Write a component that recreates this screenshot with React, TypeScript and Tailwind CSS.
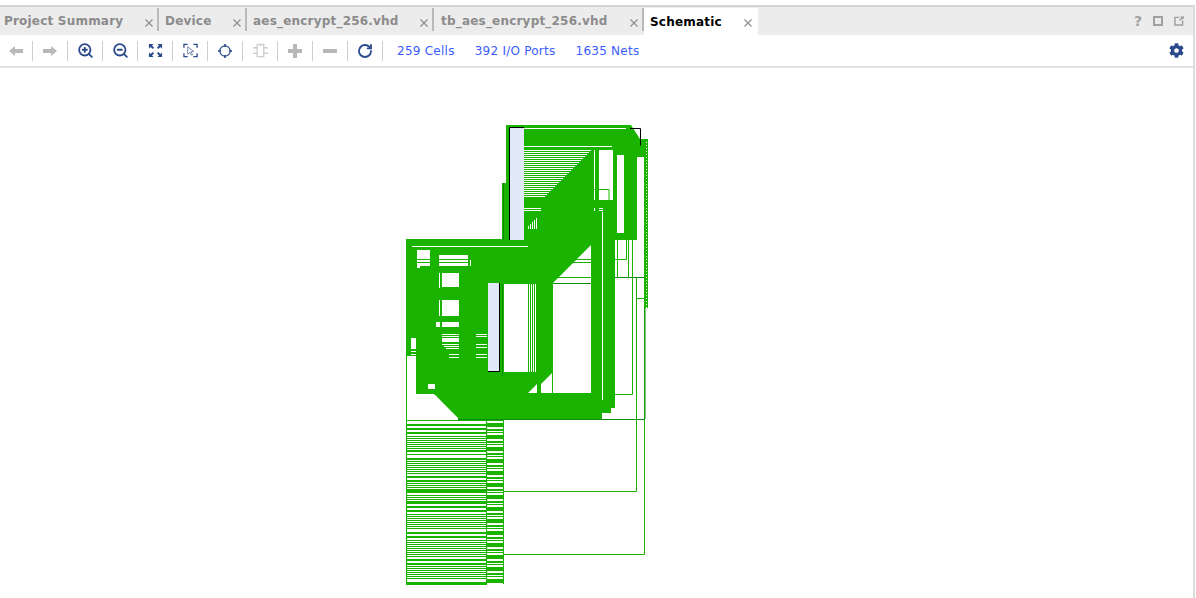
import { RotateCw, ZoomIn, ZoomOut } from 'lucide-react';
import { FaCog } from 'react-icons/fa';

const GREEN = '#1ab400';
const DARK = '#0b8a0b';
const CELL = '#dfe9f8';

const tabs = [
  { label: 'Project Summary', width: 'w-[159px]', pad: 'pl-1' },
  { label: 'Device', width: 'w-[88px]', pad: 'pl-[6px]' },
  { label: 'aes_encrypt_256.vhd', width: 'w-[187px]', pad: 'pl-[6px]' },
  { label: 'tb_aes_encrypt_256.vhd', width: 'w-[210px]', pad: 'pl-[7px]' },
];

const CloseIcon = () => (
  <svg width="8" height="8" viewBox="0 0 8 8" stroke="#8f8f8f" strokeWidth="1.200" className="mt-[3px]">
    <path d="M0.500 0.500l7 7M7.500 0.500l-7 7" />
  </svg>
);

const BackIcon = () => (
  <svg width="14" height="10" viewBox="0 0 14 10" fill="#b8b8b8">
    <path d="M0 5l6-5v3h8v4H6v3z" />
  </svg>
);

const ForwardIcon = () => (
  <svg width="14" height="10" viewBox="0 0 14 10" fill="#b8b8b8">
    <path d="M14 5L8 0v3H0v4h8v3z" />
  </svg>
);

const FitIcon = () => (
  <svg width="15" height="15" viewBox="0 0 16 16" fill="#2b4a8b">
    <path d="M1 1h5L4.300 2.700 6.500 5 5 6.500 2.700 4.300 1 6zM15 1v5l-1.700-1.700L11 6.500 9.500 5l2.200-2.300L10 1zM1 15v-5l1.700 1.700L5 9.500 6.500 11l-2.200 2.300L6 15zM15 15h-5l1.700-1.700L9.500 11 11 9.500l2.300 2.200L15 10z" />
  </svg>
);

const SelectIcon = () => (
  <svg width="15" height="15" viewBox="0 0 16 16" fill="none" stroke="#2b4a8b" strokeWidth="1.400">
    <path d="M1 5V1.500h4M11 1.500h4V5M1 11v3.500h4M11 14.500h4V11" />
    <path d="M5 4l6.500 5-3 .3 1.700 3.200-1.200.6-1.700-3.200L5 12z" strokeWidth="1" stroke="#7386ad" fill="#fff" />
  </svg>
);

const TargetIcon = () => (
  <svg width="14" height="14" viewBox="0 0 14 14" fill="none" stroke="#2b4a8b">
    <circle cx="7" cy="7" r="5.200" strokeWidth="1.200" />
    <path d="M7 0v3M7 11v3M0 7h3M11 7h3" strokeWidth="1.600" />
  </svg>
);

const ChipIcon = () => (
  <svg width="15" height="15" viewBox="0 0 16 16" fill="none" stroke="#cfcfcf" strokeWidth="1.500">
    <path d="M4.500 1.500h2.500a1 1 0 0 0 2 0h2.500v13h-7z" />
    <path d="M0 5h4.500M0 11h4.500M11.500 5H16M11.500 11H16" />
  </svg>
);

const PlusIcon = () => (
  <svg width="14" height="14" viewBox="0 0 14 14" fill="#b8b8b8">
    <path d="M5 0h4v5h5v4H9v5H5V9H0V5h5z" />
  </svg>
);

const MinusIcon = () => (
  <svg width="14" height="4" viewBox="0 0 14 4" fill="#b8b8b8">
    <rect width="14" height="4" />
  </svg>
);

const buttons = [
  <BackIcon key="back" />,
  <ForwardIcon key="forward" />,
  <ZoomIn key="in" size={17} strokeWidth={2.600} color="#2b4a8b" />,
  <ZoomOut key="out" size={17} strokeWidth={2.600} color="#2b4a8b" />,
  <FitIcon key="fit" />,
  <SelectIcon key="select" />,
  <TargetIcon key="target" />,
  <ChipIcon key="chip" />,
  <PlusIcon key="plus" />,
  <MinusIcon key="minus" />,
  <RotateCw key="refresh" size={16} strokeWidth={2.700} color="#2b4a8b" />,
];

// [x, y, w, h] of the white holes in the green mass
const holes = [
  [524, 128, 102, 1], [524, 146, 88, 1], [594, 150, 1, 50], [599, 150, 14, 50], [617, 155, 7, 78], [637, 157, 7, 83],
  [524, 208, 17, 1], [524, 210, 17, 1], [594, 208, 1, 3], [599, 208, 4, 1], [599, 210, 4, 1],
  [412, 246, 116, 1], [417, 250, 13, 9], [417, 260, 13, 2],
  [417, 263, 13, 3], [417, 266, 3, 2], [439, 255, 29, 4], [439, 260, 29, 2], [439, 263, 29, 3],
  [470, 260, 1, 6], [442, 273, 17, 1], [442, 274, 17, 13], [439, 273, 1, 15], [442, 300, 17, 16],
  [439, 300, 1, 16], [436, 322, 4, 5], [442, 322, 17, 5], [442, 334, 17, 1], [442, 336, 17, 1],
  [442, 338, 17, 4], [442, 344, 17, 1], [444, 346, 15, 1], [446, 348, 13, 1], [476, 334, 11, 1],
  [476, 336, 11, 1], [449, 354, 10, 1], [449, 357, 10, 1], [476, 344, 11, 1], [476, 347, 11, 1],
  [476, 354, 11, 1], [476, 357, 11, 1], [411, 338, 5, 11], [411, 351, 5, 1], [411, 354, 5, 1],
  [407, 356, 9, 38], [428, 384, 7, 5], [504, 284, 23, 88], [602, 212, 1, 188], [611, 408, 4, 5],
];

const stairLines = Array.from({ length: 24 }, (_, i) => ({ y: 150 + i * 2, end: 591 - i * 2 }));
const verticalStripes = [527, 529, 531, 533, 535];

// net list rows read off the picture, [y, height]
const listRows = [
  [420, 1], [424, 2], [428, 2], [432, 2], [436, 1], [438, 1], [440, 1], [442, 1], [444, 1], [446, 1], [448, 1],
  [450, 2], [454, 1], [458, 2], [461, 1], [463, 1], [465, 1], [467, 1], [469, 1], [471, 1], [473, 1], [476, 2],
  [480, 2], [483, 1], [485, 1], [487, 1], [489, 4], [495, 1], [497, 1], [499, 1], [501, 1], [502, 2], [506, 2],
  [510, 2], [514, 1], [516, 1], [518, 1], [520, 1], [522, 1], [524, 1], [526, 1], [528, 1], [532, 2], [536, 2],
  [540, 1], [542, 1], [544, 1], [546, 1], [548, 1], [550, 1], [552, 1], [554, 1], [556, 1], [559, 2], [563, 2],
  [566, 1], [568, 1], [570, 1], [572, 1], [574, 1], [576, 1], [578, 1], [582, 3],
];
const sideRows = Array.from({ length: 55 }, (_, i) => ({ y: 420 + i * 3, h: i % 4 === 1 ? 3 : i % 4 === 3 ? 2 : 1 }));

const Schematic = () => (
  <svg className="block" width="1193" height="530" viewBox="0 68 1193 530">
    {/* outer wires */}
    <g fill="none" stroke={GREEN} strokeWidth="1">
      <path d="M636.500 277v214.500H503M644.500 277v277.500H503M503.500 419v165M406.500 394v191M486.500 420v165" />
      <path d="M615 394.500h17.500V240M617.500 240v37M615 259.500h11.500V240M628.500 240v37M636 298.500h8.500" />
    </g>
    {/* main mass */}
    <path
      fill={GREEN}
      d="M506 125h125l9 14h8v101h-33v168l-4 5h-9v6H458l-24-25H406V239h96V183h4z"
    />
    <path d="M615 277.500h30M644.500 240v38" stroke={DARK} fill="none" />
    {/* the holes */}
    <g fill="#fff">
      {holes.map(([x, y, w, h]) => (
        <rect key={`${x}-${y}-${w}`} x={x} y={y} width={w} height={h} />
      ))}
      {stairLines.map((line) => (
        <rect key={line.y} x={524} y={line.y} width={line.end - 524} height={1} />
      ))}
      <path d="M591 245v148h-38V283zM552 373v20h-11v-9zM537 384v9h-9zM407 395h28l23 23v1h-51z" />
      {verticalStripes.map((x) => (
        <rect key={x} x={x} y={284} width={1} height={88} />
      ))}
      <path d="M528 226h1v3h-1zM530 224h1v5h-1zM532 222h1v7h-1zM534 220h1v9h-1zM536 218h1v11h-1z" />
    </g>
    {/* wires crossing the white parts */}
    <path d="M566 259.500h25M560 262.500h31M552 277.500h39M552.500 283v110M504 283.500h87M594.500 189.500h14.500V200" stroke={GREEN} fill="none" />
    <path d="M502.500 284v92M553 283.500h38M458 419.500h187M645 278v141" stroke={DARK} fill="none" />
    <path d="M503.500 183v57" stroke={DARK} fill="none" />
    <path d="M407 420h95v1h-95z" fill={GREEN} />
    {/* cells */}
    <rect x="509" y="128" width="15" height="112" fill={CELL} />
    <path d="M509.500 240V127.500H524" stroke="#000" fill="none" />
    <rect x="488" y="283" width="11" height="88" fill={CELL} />
    <path d="M488 371.500h11.500V283" stroke="#000" fill="none" />
    {/* right edge, dotted */}
    <rect x="644" y="240" width="4" height="68" fill={GREEN} />
    <path d="M646.500 142v166" stroke="#fff" strokeDasharray="1 2" fill="none" />
    <path d="M630 128.500h10.500v17" stroke="#000" fill="none" />
    {/* net list at the bottom */}
    {listRows.map(([y, h]) => (
      <rect key={y} x={406} y={y} width={81} height={h} fill={GREEN} />
    ))}
    {sideRows.map((row) => (
      <rect key={row.y} x={487} y={row.y} width={16} height={row.h} fill={GREEN} />
    ))}
  </svg>
);

const App = () => {
  return (
    <div className="w-[1196px] h-[598px] overflow-hidden bg-white font-['DejaVu_Sans',sans-serif] pt-[5px] pr-px">
      <div className="border-r-2 border-[#dcdcdc] h-full">
        <div className="h-[30px] bg-[#ececec] border-t-2 border-[#d4d4d4] flex items-stretch">
          {tabs.map((tab) => (
            <div key={tab.label} className={`${tab.width} ${tab.pad} flex items-center text-[12px] font-bold text-[#8b8b8b]`}>
              <span className="whitespace-nowrap tracking-[0.2px]">{tab.label}</span>
              <span className="ml-auto mr-[4px] flex">
                <CloseIcon />
              </span>
              <span className="w-[2px] h-[23px] bg-[#b9b9b9] self-start mt-px" />
            </div>
          ))}
          <div className="w-[114px] bg-white flex items-center pl-[6px] mt-px text-[12px] font-bold text-black">
            <span className="tracking-[0.2px]">Schematic</span>
            <span className="ml-auto mr-[6px] flex">
              <CloseIcon />
            </span>
          </div>
          <div className="ml-auto flex items-center gap-[11px] pr-[9px] text-[#a0a0a0]">
            <span className="text-[14px] font-bold leading-none">?</span>
            <span className="w-[10px] h-[10px] border-2 border-[#a0a0a0]" />
            <svg width="10" height="10" viewBox="0 0 11 11" fill="none" stroke="#a0a0a0" strokeWidth="1.600">
              <path d="M6 1.500H1v8.500h8.500V5M6 5l4-4M7.500 1H10v2.500" />
            </svg>
          </div>
        </div>
        <div className="h-[33px] border-b-2 border-[#e2e2e2] flex items-center text-[12px] tracking-[0.25px] text-[#3a5cff]">
          {buttons.map((icon, i) => (
            <div key={i} className="w-[35px] h-[20px] flex items-center justify-center border-r border-[#cfcfcf] shrink-0 first:w-[33px]">
              {icon}
            </div>
          ))}
          <span className="ml-[14px] mt-px">259 Cells</span>
          <span className="ml-[20px] mt-px">392 I/O Ports</span>
          <span className="ml-[20px] mt-px">1635 Nets</span>
          <FaCog className="ml-auto mr-[9px] text-[#2b4a8b]" size={15} />
        </div>
        <Schematic />
      </div>
    </div>
  );
};

export default App;
